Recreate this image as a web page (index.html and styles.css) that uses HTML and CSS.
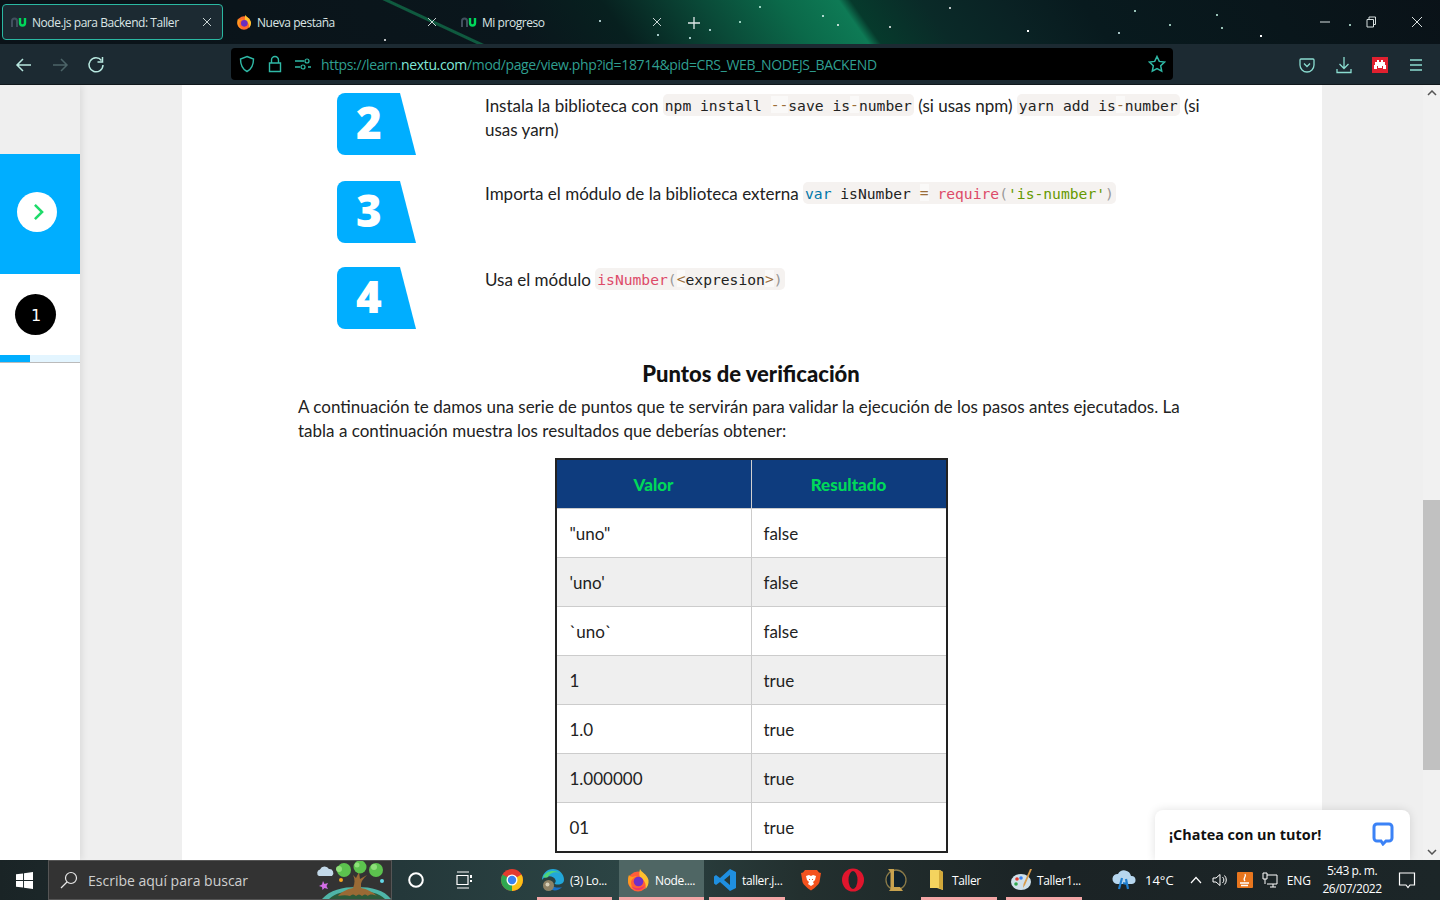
FILE: index.html
```html
<!DOCTYPE html>
<html lang="es">
<head>
<meta charset="utf-8">
<title>Node.js para Backend: Taller</title>
<link rel="stylesheet" href="styles.css">
</head>
<body>
<header class="tabbar">
  <div class="tab tab-active">
    <svg class="fav" viewBox="0 0 16 12"><path d="M1 11V5a2.500 2.500 0 0 1 5 0v6" fill="none" stroke="#42505e" stroke-width="2"/><path d="M9 2v5a2.500 2.500 0 0 0 5 0V2" fill="none" stroke="#00d85a" stroke-width="2.400"/></svg>
    <span class="tab-label">Node.js para Backend: Taller</span>
    <svg class="tab-x" viewBox="0 0 10 10"><path d="M1 1l8 8M9 1l-8 8" stroke="#c8d4d4" fill="none"/></svg>
  </div>
  <div class="tab">
    <svg class="fav-ff" viewBox="0 0 24 24"><circle cx="12" cy="13.500" r="10" fill="#ff6a2a"/><path d="M14 1c1 3 7 5 8.500 11 .5 4-1 7-3 9 1-5-1-9-5-11C13 8 13 5 14 1z" fill="#ffc02e"/><path d="M3 7c1 1 2 2 4 2 1-1 3-1 4-1-2 1-6 3-6 7 0 3 2 6 5 7-5-1-8-5-8-9 0-2 0-4 1-6z" fill="#ff9a1f"/><circle cx="12.500" cy="14" r="5" fill="#6a2ec0"/></svg>
    <span class="tab-label">Nueva pestaña</span>
    <svg class="tab-x" viewBox="0 0 10 10"><path d="M1 1l8 8M9 1l-8 8" stroke="#c8d4d4" fill="none"/></svg>
  </div>
  <div class="tab">
    <svg class="fav" viewBox="0 0 16 12"><path d="M1 11V5a2.500 2.500 0 0 1 5 0v6" fill="none" stroke="#42505e" stroke-width="2"/><path d="M9 2v5a2.500 2.500 0 0 0 5 0V2" fill="none" stroke="#00d85a" stroke-width="2.400"/></svg>
    <span class="tab-label">Mi progreso</span>
    <svg class="tab-x" viewBox="0 0 10 10"><path d="M1 1l8 8M9 1l-8 8" stroke="#c8d4d4" fill="none"/></svg>
  </div>
  <svg class="tab-plus" viewBox="0 0 14 14"><path d="M7 1v12M1 7h12" stroke="#dfe8e8" stroke-width="1.300" fill="none"/></svg>
  <div class="win-controls">
    <svg class="win-ic" viewBox="0 0 12 12"><path d="M1 6h10" stroke="#d8e0e0" fill="none"/></svg>
    <svg class="win-ic" viewBox="0 0 12 12"><path d="M2 3.500h6.500v7.500H2zM4 3.500V1h6.500v7.500H8.500" stroke="#d8e0e0" fill="none"/></svg>
    <svg class="win-ic" viewBox="0 0 12 12"><path d="M1 1l10 10M11 1L1 11" stroke="#d8e0e0" fill="none"/></svg>
  </div>
</header>

<nav class="navbar">
  <div class="nav-btns">
    <svg class="nav-ic" viewBox="0 0 18 18"><path d="M16 9H2M8 3L2 9l6 6" fill="none" stroke="#b8e8e0" stroke-width="1.500"/></svg>
    <svg class="nav-ic" viewBox="0 0 18 18"><path d="M2 9h14M10 3l6 6-6 6" fill="none" stroke="#4c6468" stroke-width="1.500"/></svg>
    <svg class="nav-ic" viewBox="0 0 18 18"><path d="M14.500 4.500A7 7 0 1 0 16 9" fill="none" stroke="#b8e8e0" stroke-width="1.500"/><path d="M15.500 1v5h-5" fill="none" stroke="#b8e8e0" stroke-width="1.500"/></svg>
  </div>
  <div class="urlbar">
    <svg class="url-ic" viewBox="0 0 18 18"><path d="M9 1.500l6.500 2.500c0 6-1.500 10-6.500 12.500C4 14 2.500 10 2.500 4z" fill="none" stroke="#2fb9a6" stroke-width="1.400"/></svg>
    <svg class="url-ic" viewBox="0 0 18 18"><path d="M5.500 8V5a3.500 3.500 0 0 1 7 0v3M3.500 8h11v8.500h-11z" fill="none" stroke="#2fb9a6" stroke-width="1.400"/></svg>
    <svg class="url-ic url-ic-last" viewBox="0 0 18 18"><path d="M1 6h9M1 12h5M14 12h3" stroke="#2fb9a6" stroke-width="1.300" fill="none"/><circle cx="13" cy="6" r="2" fill="none" stroke="#2fb9a6" stroke-width="1.200"/><circle cx="9" cy="12" r="2" fill="none" stroke="#2fb9a6" stroke-width="1.200"/></svg>
    <span class="url-text">https://learn.<b>nextu.com</b>/mod/page/view.php?id=18714&amp;pid=CRS_WEB_NODEJS_BACKEND</span>
    <svg class="url-star" viewBox="0 0 18 18"><path d="M9 1.500l2.300 4.900 5.200.7-3.800 3.700 1 5.300L9 13.500l-4.700 2.600 1-5.300L1.500 7.100l5.200-.7z" fill="none" stroke="#2fb9a6" stroke-width="1.500"/></svg>
  </div>
  <div class="nav-right">
    <svg class="nav-ic" viewBox="0 0 18 18"><path d="M3 3h12a1 1 0 0 1 1 1v5a7 7 0 0 1-14 0V4a1 1 0 0 1 1-1z" fill="none" stroke="#8adcd0" stroke-width="1.300"/><path d="M6 7.500L9 10.500l3-3" fill="none" stroke="#8adcd0" stroke-width="1.300"/></svg>
    <svg class="nav-ic" viewBox="0 0 18 18"><path d="M9 1v11M4.500 8L9 12.500 13.500 8M2 13v3.500h14V13" fill="none" stroke="#8adcd0" stroke-width="1.300"/></svg>
    <div class="ext-red"><svg viewBox="0 0 12 10"><path d="M3 0h2v2h2V0h2v2h2v3h1v4h-3V6H8v2H4V6H3v3H0V5h1V2h2z" fill="#fff"/></svg></div>
    <svg class="nav-ic" viewBox="0 0 18 18"><path d="M3 4h12M3 9h12M3 14h12" stroke="#8adcd0" stroke-width="1.400" fill="none"/></svg>
  </div>
</nav>

<main class="viewport">
  <aside class="sidebar">
    <div class="side-top"></div>
    <div class="side-blue">
      <div class="side-toggle"><svg viewBox="0 0 12 20"><path d="M2 2l8 8-8 8" fill="none" stroke="#1edb6a" stroke-width="2.800"/></svg></div>
    </div>
    <div class="side-white">
      <div class="side-step-row"><div class="side-step">1</div></div>
      <div class="side-progress"><div class="side-progress-fill"></div></div>
    </div>
  </aside>

  <section class="page">
    <div class="step">
      <div class="step-badge">2</div>
      <p class="step-text">Instala la biblioteca con <code>npm install <i class="op">--</i>save is<i class="op">-</i>number</code> (si usas npm) <code>yarn add is<i class="op">-</i>number</code> (si usas yarn)</p>
    </div>
    <div class="step">
      <div class="step-badge">3</div>
      <p class="step-text">Importa el módulo de la biblioteca externa <code><i class="kw">var</i> isNumber <i class="op">=</i> <i class="fn">require</i><i class="pn">(</i><i class="st">'is-number'</i><i class="pn">)</i></code></p>
    </div>
    <div class="step">
      <div class="step-badge">4</div>
      <p class="step-text">Usa el módulo <code><i class="fn">isNumber</i><i class="pn">(</i><i class="op">&lt;</i>expresion<i class="op">&gt;</i><i class="pn">)</i></code></p>
    </div>

    <h2 class="section-title">Puntos de verificación</h2>
    <p class="section-intro">A continuación te damos una serie de puntos que te servirán para validar la ejecución de los pasos antes ejecutados. La tabla a continuación muestra los resultados que deberías obtener:</p>

    <table class="results">
      <thead><tr><th>Valor</th><th>Resultado</th></tr></thead>
      <tbody>
        <tr><td>"uno"</td><td>false</td></tr>
        <tr><td>'uno'</td><td>false</td></tr>
        <tr><td>`uno`</td><td>false</td></tr>
        <tr><td>1</td><td>true</td></tr>
        <tr><td>1.0</td><td>true</td></tr>
        <tr><td>1.000000</td><td>true</td></tr>
        <tr><td>01</td><td>true</td></tr>
      </tbody>
    </table>
  </section>

  <div class="gutter"></div>

  <div class="scrollbar">
    <svg class="sb-arrow" viewBox="0 0 10 6"><path d="M1 5l4-4 4 4" fill="none" stroke="#555" stroke-width="1.500"/></svg>
    <div class="sb-track"><div class="sb-thumb"></div></div>
    <svg class="sb-arrow" viewBox="0 0 10 6"><path d="M1 1l4 4 4-4" fill="none" stroke="#555" stroke-width="1.500"/></svg>
  </div>

  <div class="chat">
    <span>¡Chatea con un tutor!</span>
    <svg viewBox="0 0 22 24"><path d="M5 2h12a3 3 0 0 1 3 3v11a3 3 0 0 1-3 3h-3l-3 3-2-3H5a3 3 0 0 1-3-3V5a3 3 0 0 1 3-3z" fill="none" stroke="#3b82f6" stroke-width="3"/></svg>
  </div>
</main>

<footer class="taskbar">
  <div class="tb-start"><svg viewBox="0 0 18 18"><path d="M0 2.500l7.500-1v7H0zM8.500 1.300L18 0v8.500H8.500zM0 9.500h7.500v7L0 15.500zM8.500 9.500H18V18l-9.500-1.300z" fill="#fff"/></svg></div>
  <div class="tb-search">
    <svg class="tb-search-ic" viewBox="0 0 18 18"><circle cx="11" cy="7" r="5.500" fill="none" stroke="#e8e8e8" stroke-width="1.200"/><path d="M7 11l-6 6" stroke="#e8e8e8" stroke-width="1.200"/></svg>
    <span class="tb-search-text">Escribe aquí para buscar</span>
    <svg class="tb-doodle" viewBox="0 0 81 38">
      <path d="M12 38C20 29 32 26 47 26s27 3 34 12z" fill="#4fb5a8"/>
      <path d="M19 38c6-6 16-8 28-8s22 2 28 8z" fill="#2d5a3a"/>
      <path d="M28 35c3-4 9-7 15-8 2-5 2-9 0-13l3 3 3-6 1 7 7-4c-3 3-6 6-6 10l0 3c6 1 12 4 16 8-4-2-8-2-9 0-2-2-4-2-6 0-2-2-4-2-6 0-2-2-4-2-6 0-3-1-7-1-12 0z" fill="#9a6a35"/>
      <circle cx="34" cy="9" r="7" fill="#5cc24e"/><circle cx="29" cy="8" r="3" fill="#8fe07a"/>
      <circle cx="50" cy="6" r="6.500" fill="#5cc24e"/><circle cx="47" cy="4" r="2.500" fill="#8fe07a"/>
      <circle cx="66" cy="9" r="7" fill="#5cc24e"/><circle cx="64" cy="6" r="3" fill="#8fe07a"/>
      <path d="M9 15a3.500 3.500 0 0 1 1-6.500 5 5 0 0 1 9-.5 4 4 0 0 1 3 7z" fill="#c3d8e8"/>
      <path d="M13 20l1.500 3 3.500-1-1.500 3 1.500 3-3.500-1-2 2-.5-3-3-1 3-1.500z" fill="#d46ee6"/>
      <circle cx="31" cy="19" r="2" fill="#f5a623"/><circle cx="72" cy="20" r="2" fill="#64d8e8"/>
    </svg>
  </div>
  <div class="tb-slot tb-slot-cortana"><svg class="tb-ic" viewBox="0 0 18 18"><circle cx="9" cy="9" r="6.800" fill="none" stroke="#fff" stroke-width="2"/></svg></div>
  <div class="tb-slot tb-slot-task"><svg class="tb-ic" viewBox="0 0 18 18"><path d="M2 1h12M2 17h12M2 4.500h11v9H2z" fill="none" stroke="#fff" stroke-width="1.200"/><path d="M16 4v3M16 9v2" stroke="#fff" stroke-width="2"/></svg></div>
  <div class="tb-slot tb-slot-chrome"><svg class="tb-ic-lg" viewBox="0 0 24 24"><circle cx="12" cy="12" r="11" fill="#e33b2e"/><path d="M12 12L2.500 6.500A11 11 0 0 0 12 23z" fill="#2fa84f"/><path d="M12 12l9.500-5.500A11 11 0 0 1 12 23z" fill="#fbc116"/><circle cx="12" cy="12" r="5.500" fill="#fff"/><circle cx="12" cy="12" r="4.200" fill="#3b82f0"/></svg></div>
  <div class="tb-app tb-app-open tb-app-edge"><svg class="tb-ic-lg" viewBox="0 0 24 24"><path d="M1 12a11 11 0 0 1 22 0c0 3-3 4.500-6 4.500-2 0-3.500-.5-3.500-1 1-1 1.500-2 1-3.500-2-5-10-5-13.500 0z" fill="#22a6d8"/><path d="M2 9c3-7 13-8 18-3-4-3-11-2-13 3-1 1-3 1-5 0z" fill="#4fd37a"/><path d="M9 21c4 2.500 9 1.500 12-2-3 1-8 1-10-2z" fill="#1b6fc4"/><circle cx="7.500" cy="17.500" r="5.500" fill="#8f8265"/><circle cx="6.500" cy="16.500" r="2" fill="#d8d0b8"/></svg><span>(3) Lo...</span></div>
  <div class="tb-app tb-app-open tb-app-active"><svg class="tb-ic-lg" viewBox="0 0 24 24"><circle cx="12" cy="13.500" r="10" fill="#ff5d3a"/><path d="M14 1c1 3 7 5 8.500 11 .5 4-1 7-3 9 1-5-1-9-5-11C13 8 13 5 14 1z" fill="#ffc02e"/><path d="M3 7c1 1 2 2 4 2 1-1 3-1 4-1-2 1-6 3-6 7 0 3 2 6 5 7-5-1-8-5-8-9 0-2 0-4 1-6z" fill="#ff9a1f"/><path d="M12 22a9 9 0 0 1-7-4c4 3 10 3 14-1-1 3-4 5-7 5z" fill="#f0356a"/><circle cx="12.500" cy="13.500" r="4.800" fill="#7030c8"/></svg><span>Node....</span></div>
  <div class="tb-app tb-app-open tb-app-code"><svg class="tb-ic-lg" viewBox="0 0 24 24"><path d="M17 1l6 3v16l-6 3L7 14l-4 3-2-1.500V8.500L3 7l4 3zM17 7l-6 5 6 5z" fill="#1f8fe0"/></svg><span>taller.j...</span></div>
  <div class="tb-slot tb-slot-brave"><svg class="tb-ic-lg" viewBox="0 0 24 24"><path d="M6 2h12l2 2.500 2 .5-1.500 9c-1 3-6 7-8.500 8.500C9.500 21 4.500 17 3.500 14L2 5l2-.5z" fill="#f4521e"/><path d="M7 8l3-1 2 1 2-1 3 1-1 4-2 2 1 2-3 2-3-2 1-2-2-2z" fill="#fff"/><path d="M10 11h1v1h-1zM13 11h1v1h-1z" fill="#f4521e"/></svg></div>
  <div class="tb-slot tb-slot-opera"><svg class="tb-ic-lg" viewBox="0 0 24 24"><ellipse cx="12" cy="12" rx="11" ry="11.500" fill="#e0152d"/><ellipse cx="12" cy="12" rx="4.500" ry="9" fill="#1e2a2c"/></svg></div>
  <div class="tb-slot tb-slot-lol"><svg class="tb-ic-lg" viewBox="0 0 24 24"><circle cx="13" cy="12" r="10" fill="#10222c" stroke="#8a7a48" stroke-width="1.300"/><path d="M5 1h6v18h6l3 4H6l1.500-2V4z" fill="#c8a24e"/></svg></div>
  <div class="tb-app tb-app-open tb-app-folder"><svg class="tb-ic-lg" viewBox="0 0 24 24"><path d="M5 2h10l3 2v18l-6-2H5z" fill="#f4d35e"/><path d="M14 2l4 2v18l-4-2z" fill="#d2a93a"/></svg><span>Taller</span></div>
  <div class="tb-app tb-app-open tb-app-paint"><svg class="tb-ic-lg" viewBox="0 0 24 24"><ellipse cx="11" cy="14" rx="10" ry="8" fill="#cfe0ea"/><circle cx="7" cy="11" r="1.800" fill="#e33b2e"/><circle cx="11" cy="10" r="1.800" fill="#3b82f0"/><circle cx="6" cy="16" r="1.800" fill="#2fa84f"/><path d="M22 1l-7 16-2 3 .5-4L20 1z" fill="#d89a4a"/></svg><span>Taller1...</span></div>
  <div class="tb-tray">
    <svg class="tb-weather" viewBox="0 0 26 22"><path d="M6 15a5 5 0 0 1 1-10 7 7 0 0 1 13 2 4 4 0 0 1 1 8z" fill="#b6d6ee"/><path d="M11 9l-3 11M15 10l2 10M12 14l4 1" stroke="#1f7fd0" stroke-width="2.200" fill="none"/></svg>
    <span class="tb-temp">14°C</span>
    <svg class="tray-chev" viewBox="0 0 12 8"><path d="M1 7l5-5.500L11 7" fill="none" stroke="#fff" stroke-width="1.200"/></svg>
    <svg class="tray-ic" viewBox="0 0 16 16"><path d="M1 6h3l4-3.500v11L4 10H1zM10.500 5a4 4 0 0 1 0 6M12.500 3.500a6.500 6.500 0 0 1 0 9" fill="none" stroke="#fff"/></svg>
    <svg class="tray-ic" viewBox="0 0 16 16"><rect width="16" height="16" rx="1" fill="#e8761e"/><path d="M8 2c2 3-3 4 0 7M3 11h9M4 13.500h7" fill="none" stroke="#fff" stroke-width="1.300"/></svg>
    <svg class="tray-ic" viewBox="0 0 16 16"><path d="M5 3h10v9H5M8 15h6M11 12v3M1 1h4v6H1zM3 7v5" fill="none" stroke="#fff"/></svg>
    <span class="tray-lang">ENG</span>
    <div class="tray-clock"><span>5:43 p. m.</span><span>26/07/2022</span></div>
    <svg class="tray-notif" viewBox="0 0 18 18"><path d="M1.500 2h15v12H12l-2 2.500L8 14H1.500z" fill="none" stroke="#fff" stroke-width="1.200"/></svg>
  </div>
</footer>
</body>
</html>
```
FILE: styles.css
```css
* { box-sizing: border-box; }
html, body { margin: 0; height: 100%; }
body {
  width: 1440px; height: 900px; overflow: hidden;
  display: flex; flex-direction: column;
  font-family: "Lato", "Open Sans", sans-serif;
  color: #222;
}
/* ---- browser tab strip ---- */
.tabbar {
  height: 44px; flex: none; display: flex; align-items: flex-start; padding: 4px 0 0 2px;
  font-family: "Open Sans", sans-serif; font-size: 12px; color: #dbe5e5;
  background:
    radial-gradient(circle 1.2px at 1028px 31px, #fff 60%, transparent),
    radial-gradient(circle 1px at 838px 25px, #fff 60%, transparent),
    radial-gradient(circle 1px at 823px 16px, #e8ffff 60%, transparent),
    radial-gradient(circle 1px at 890px 27px, #fff 60%, transparent),
    radial-gradient(circle 1px at 950px 8px, #fff 60%, transparent),
    radial-gradient(circle 1.2px at 1261px 36px, #fff 60%, transparent),
    radial-gradient(circle 1px at 1217px 15px, #cfe 60%, transparent),
    radial-gradient(circle 1px at 1135px 11px, #cfe 60%, transparent),
    radial-gradient(circle 1px at 1170px 25px, #cfe 60%, transparent),
    radial-gradient(circle 1px at 1119px 33px, #dff 60%, transparent),
    radial-gradient(circle 1px at 1350px 25px, #cfe 60%, transparent),
    radial-gradient(circle 1px at 1222px 28px, #cfe 60%, transparent),
    radial-gradient(circle 1px at 600px 21px, #dff 60%, transparent),
    radial-gradient(circle 1px at 658px 35px, #dff 60%, transparent),
    radial-gradient(circle 1px at 690px 38px, #dff 60%, transparent),
    radial-gradient(circle 1px at 710px 30px, #dff 60%, transparent),
    radial-gradient(circle 1px at 760px 7px, #cfe 60%, transparent),
    radial-gradient(circle 1px at 740px 22px, #cfe 60%, transparent),
    radial-gradient(circle 1px at 385px 40px, #fff 60%, transparent),
    linear-gradient(25deg, transparent 201px, #0f5a3f 202px, #0f5a3f 204px, transparent 205px),
    linear-gradient(55deg, #0a1218 0, #0a161c 430px, #07201f 517px, #0a4a38 599px, #0b6a4a 665px, #0e7a55 712px, #063a2c 722px, #0a2a28 780px, #0a2224 845px, #081a1e 910px, #0a1218 1214px);
}
.tab {
  width: 225px; height: 36px; flex: none; display: flex; align-items: center;
  padding: 0 14px 0 8px; border: 1px solid transparent; border-radius: 4px;
}
.tab-active { width: 221px; margin-right: 4px; padding-right: 10px; background: #1c2a32; border-color: #2ab8a2; }
.fav { width: 16px; height: 12px; margin-right: 5px; flex: none; }
.fav-ff { width: 16px; height: 16px; margin-right: 5px; flex: none; }
.tab-label { flex: 1; white-space: nowrap; letter-spacing: -.45px; }
.tab-x { width: 10px; height: 10px; flex: none; }
.tab-plus { width: 14px; height: 14px; margin: 12px 0 0 10px; flex: none; }
.win-controls { margin-left: auto; display: flex; gap: 34px; padding: 12px 17px 0 0; }
.win-ic { width: 12px; height: 12px; display: block; }

/* ---- nav bar ---- */
.navbar {
  height: 41px; flex: none; display: flex; align-items: center; background: #1c2a32;
  border-bottom: 1px solid #10181c;
}
.nav-btns { width: 231px; flex: none; display: flex; gap: 18px; padding: 2px 0 0 15px; }
.nav-ic { width: 18px; height: 18px; display: block; flex: none; }
.urlbar {
  width: 942px; height: 32px; flex: none; background: #000; border-radius: 4px;
  display: flex; align-items: center; padding: 0 7px 0 7px; color: #2f9f90;
}
.url-ic { width: 18px; height: 18px; margin-right: 10px; flex: none; }
.url-ic-last { margin-right: 9px; }
.url-text { flex: 1; font: 14px "Open Sans", sans-serif; white-space: nowrap; letter-spacing: -.35px; }
.url-text b { font-weight: 400; color: #7fe8d8; }
.url-star { width: 18px; height: 18px; flex: none; }
.nav-right { flex: 1; display: flex; align-items: center; gap: 19px; padding: 2px 0 0 125px; }
.ext-red { width: 16px; height: 16px; background: #e0202f; display: flex; align-items: center; justify-content: center; flex: none; }
.ext-red svg { width: 12px; height: 10px; }

/* ---- page viewport ---- */
.viewport { height: 775px; flex: none; display: flex; background: #efefef; overflow: hidden; position: relative; }
.sidebar { width: 80px; flex: none; display: flex; flex-direction: column; margin-right: 102px; box-shadow: 3px 0 6px rgba(0,0,0,.07); }
.side-top { height: 69px; flex: none; background: #efefef; }
.side-blue { height: 120px; flex: none; background: #00aeff; display: flex; align-items: center; padding: 0 0 4px 17px; }
.side-toggle { width: 40px; height: 40px; border-radius: 50%; background: #fff; display: flex; align-items: center; justify-content: center; padding-left: 2px; }
.side-toggle svg { width: 11px; height: 18px; }
.side-white { flex: 1; background: #fff; }
.side-step-row { height: 81px; display: flex; align-items: center; padding-left: 15px; }
.side-step { width: 41px; height: 41px; border-radius: 50%; background: #000; color: #fff; display: flex; align-items: center; justify-content: center; font: 16px "DejaVu Sans", sans-serif; padding: 2px 0 0 1px; }
.side-progress { height: 8px; background: #e3f5ff; border-bottom: 1px solid #bbb; }
.side-progress-fill { width: 30px; height: 7px; background: #00aeff; }

.page { width: 1140px; flex: none; background: #fff; padding: 8px 118px 0 116px; font-size: 17px; line-height: 24px; }
.gutter { flex: 1; }

.step { display: flex; min-height: 62px; padding-left: 39px; margin-bottom: 26px; }
.step:nth-child(2) { margin-bottom: 24px; }
.step:nth-child(3) { margin-bottom: 0; }
.step-badge {
  width: 79px; height: 62px; flex: none; margin-right: 69px; background: #00aeff; color: #fff;
  clip-path: path("M8 0H63L79 62H8A8 8 0 0 1 0 54V8A8 8 0 0 1 8 0Z");
  display: flex; align-items: center; justify-content: center; padding: 0 15px 4px 0;
  font: 800 44px "Open Sans", sans-serif;
}
.step-text { margin: 0; padding-top: 1px; }
code { font: 14.67px "DejaVu Sans Mono", monospace; background: #f5f2f0; border-radius: 5px; padding: 2.5px 2px; vertical-align: 2px; }
code i { font-style: normal; }
.op { color: #9a6e3a; background: rgba(255,255,255,.5); }
.kw { color: #07a; }
.fn { color: #dd4a68; }
.pn { color: #999; }
.st { color: #690; }

.section-title { margin: 32px 0 8px; font-size: 22px; line-height: 26px; font-weight: 900; text-align: center; color: #111; }
.section-intro { margin: 0 0 15px; }

.results { width: 393px; margin: 0 auto; border-collapse: collapse; border: 2px solid #222; table-layout: fixed; }
.results th { height: 49px; background: #0e3c7e; color: #00d85a; font-size: 17px; font-weight: 900; padding: 2px 0 0; }
.results th + th { border-left: 1px solid #d0d0d0; }
.results td { height: 49px; padding: 2px 12px 0; border: 1px solid #ccc; border-left: 0; border-right: 0; }
.results td:first-child { padding-left: 13px; }
.results td + td { border-left: 1px solid #ccc; }
.results tbody tr:nth-child(even) td { background: #efefef; }
.results tbody tr:last-child td { height: 50px; }

.scrollbar { width: 17px; flex: none; display: flex; flex-direction: column; background: #f1f1f1; }
.sb-arrow { width: 10px; height: 6px; flex: none; margin: 5px auto; display: block; }
.sb-track { flex: 1; padding-top: 399px; }
.sb-thumb { height: 270px; background: #c1c1c1; }

.chat {
  position: absolute; right: 30px; bottom: 0; width: 255px; height: 50px; background: #fff;
  border-radius: 8px 8px 0 0; box-shadow: 0 0 10px rgba(0,0,0,.12);
  display: flex; align-items: center; justify-content: space-between; padding: 0 16px 2px 14px;
  font: 700 14.4px "Open Sans", sans-serif; color: #111;
}
.chat svg { width: 22px; height: 24px; }

/* ---- windows taskbar ---- */
.taskbar {
  height: 40px; flex: none; display: flex; align-items: center; color: #fff;
  font: 12px "Open Sans", sans-serif;
  background: linear-gradient(90deg, #1a2426 0, #24383a 400px, #2c4444 620px, #23302f 800px, #1b2325 1050px, #1c2628 1440px);
}
.tb-start { width: 48px; height: 40px; flex: none; display: flex; align-items: center; justify-content: center; }
.tb-start svg { width: 17px; height: 17px; }
.tb-search { width: 344px; height: 40px; flex: none; background: #333; border: 1px solid #555; border-bottom-color: #555; display: flex; align-items: center; padding-left: 11px; overflow: hidden; }
.tb-search-ic { width: 18px; height: 18px; flex: none; margin-right: 10px; }
.tb-search-text { flex: 1; font-size: 14px; color: #cfcfcf; }
.tb-doodle { width: 81px; height: 38px; flex: none; }
.tb-slot { height: 40px; flex: none; display: flex; align-items: center; justify-content: center; }
.tb-slot-cortana { width: 48px; }
.tb-slot-task { width: 48px; }
.tb-slot-chrome { width: 47px; margin-right: 2px; }
.tb-slot-brave { width: 52px; }
.tb-slot-opera { width: 32px; }
.tb-slot-lol { width: 32px; margin-left: 10px; }
.tb-ic { width: 18px; height: 18px; }
.tb-ic-lg { width: 24px; height: 24px; flex: none; }
.tb-app { height: 40px; flex: none; display: flex; align-items: center; gap: 5px; padding-left: 4px; font-size: 12px; white-space: nowrap; letter-spacing: -.35px; }
.tb-app-open { border-bottom: 3px solid #f3a6a6; padding-top: 3px; }
.tb-app-edge { width: 75px; margin-right: 7px; }
.tb-app-active { width: 85px; margin-right: 5px; background: #4f6664; padding-left: 7px; }
.tb-app-code { width: 76px; }
.tb-app-folder { width: 76px; margin-left: 10px; padding-left: 4px; gap: 3px; }
.tb-app-paint { width: 76px; margin-left: 9px; gap: 3px; }
.tb-tray { flex: 1; display: flex; align-items: center; height: 40px; padding-left: 29px; }
.tb-weather { width: 26px; height: 22px; flex: none; margin-right: 8px; }
.tb-temp { font-size: 13px; margin-right: 16px; }
.tray-chev { width: 12px; height: 8px; flex: none; margin-right: 10px; }
.tray-ic { width: 16px; height: 16px; flex: none; margin-right: 9px; }
.tray-lang { margin: 0 9px 0 0; }
.tray-clock { display: flex; flex-direction: column; align-items: center; line-height: 18px; width: 64px; font-size: 12px; letter-spacing: -.45px; }
.tray-notif { width: 18px; height: 18px; flex: none; margin-left: 14px; }
```
